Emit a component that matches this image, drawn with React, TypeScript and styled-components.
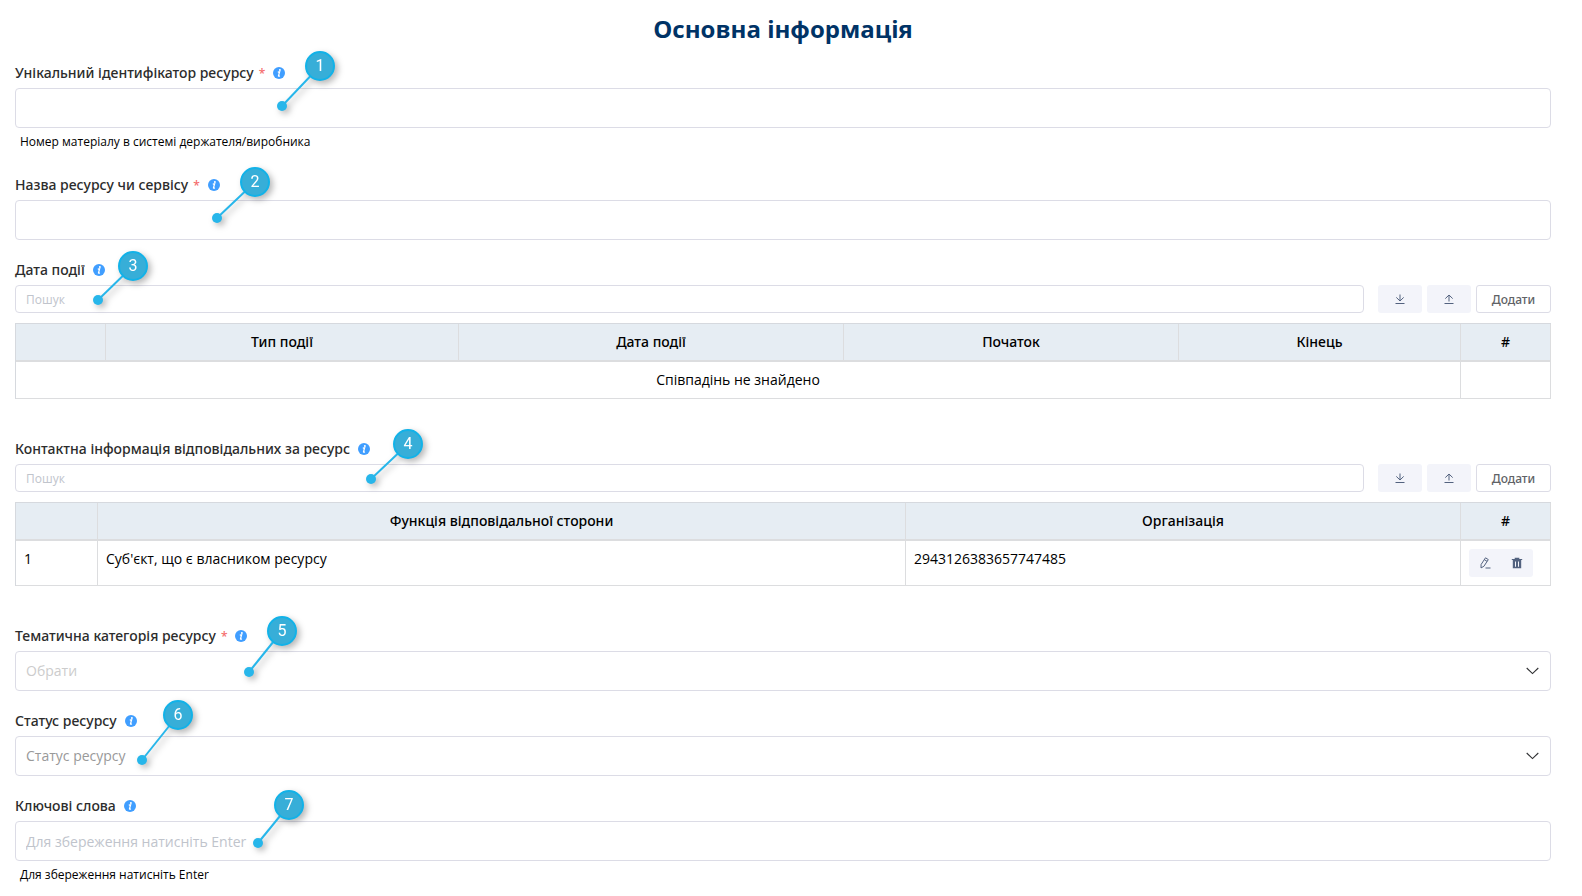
import React from "react";
import styled, { createGlobalStyle } from "styled-components";

const GlobalStyle = createGlobalStyle`
  *, *::before, *::after { box-sizing: border-box; }
  body {
    margin: 0;
    background: #fff;
    color: #000;
    font: 14px/20px "Open Sans", "Noto Sans", sans-serif;
  }
`;

const Form = styled.form`
  display: flex;
  flex-direction: column;
  gap: 20px;
  padding: 14px 31px 10px 15px;
`;

const Title = styled.h1`
  margin: 0 0 -1px;
  color: #003366;
  font-size: 24px;
  line-height: 30px;
  font-weight: 700;
  text-align: center;
`;

const FieldBox = styled.section<{ $spaced?: boolean }>`
  position: relative;
  padding-bottom: ${(p) => (p.$spaced ? 20 : 0)}px;
`;

const LabelRow = styled.div`
  display: flex;
  align-items: center;
  gap: 8px;
  height: 20px;
  margin-bottom: 5px;
`;

const Label = styled.label`
  color: #2c2c2c;
  font-family: "Noto Sans", sans-serif;
  font-weight: 500;
`;

const Required = styled.span`
  margin-left: 5px;
  color: #f56c6c;
  font-size: 12px;
`;

const TextInput = styled.input<{ $small?: boolean }>`
  display: block;
  flex: 1;
  width: 100%;
  min-width: 0;
  height: ${(p) => (p.$small ? 28 : 40)}px;
  padding: 0 10px;
  border: 1px solid #dcdce6;
  border-radius: 4px;
  background: #fff;
  color: #333;
  font: inherit;
  font-size: ${(p) => (p.$small ? 12 : 14)}px;
  outline: none;
  &::placeholder { color: #c0c4cc; opacity: 1; }
`;

const Hint = styled.p`
  margin: 0;
  padding: 5px 5px 4px;
  font-size: 12px;
  line-height: 18px;
`;

const SelectWrap = styled.div`
  display: grid;
  align-items: center;
  & > * { grid-area: 1 / 1; }
  & > svg {
    justify-self: end;
    margin-right: 12px;
    pointer-events: none;
  }
`;

const SelectBox = styled.select<{ $muted?: boolean }>`
  width: 100%;
  height: 40px;
  padding: 0 10px;
  appearance: none;
  border: 1px solid #dcdce6;
  border-radius: 4px;
  background: #fff;
  color: ${(p) => (p.$muted ? "#cccccc" : "#999999")};
  font: inherit;
  outline: none;
`;

const Toolbar = styled.div`
  display: flex;
  gap: 5px;
  margin-bottom: 10px;
  & > input { margin-right: 9px; }
`;

const Button = styled.button<{ $kind: "icon" | "outline" | "row" }>`
  display: flex;
  align-items: center;
  justify-content: center;
  width: ${(p) => ({ icon: 44, outline: 75, row: 32 })[p.$kind]}px;
  height: 28px;
  padding: 0;
  border: ${(p) => (p.$kind === "outline" ? "1px solid #dcdce6" : "0")};
  border-radius: ${(p) => (p.$kind === "row" ? 0 : 3)}px;
  background: ${(p) => (p.$kind === "outline" ? "#fff" : "#f3f4fa")};
  color: ${(p) => (p.$kind === "outline" ? "#606266" : "#53627f")};
  font-family: "Noto Sans", sans-serif;
  font-size: 12px;
  font-weight: 500;
  cursor: pointer;
`;

const ButtonPair = styled.div`
  display: flex;
  width: 64px;
  overflow: hidden;
  border-radius: 3px;
`;

const Table = styled.table`
  width: 100%;
  table-layout: fixed;
  border-collapse: separate;
  border-spacing: 0;
  border: 1px solid #d6d9de;
  border-width: 1px 0 0 1px;
`;

const Th = styled.th`
  padding: 8px;
  border-right: 1px solid #dcdddf;
  border-bottom: 2px solid #dcdddf;
  background: #e6edf3;
  font-family: "Noto Sans", sans-serif;
  font-weight: 500;
  text-align: center;
`;

const Td = styled.td<{ $center?: boolean }>`
  padding: 8px;
  border-right: 1px solid #dcdddf;
  border-bottom: 1px solid #dcdddf;
  text-align: ${(p) => (p.$center ? "center" : "left")};
  vertical-align: top;
`;

const CalloutBox = styled.span<{ $x: number; $y: number }>`
  position: absolute;
  left: ${(p) => p.$x}px;
  top: ${(p) => p.$y}px;
  z-index: 1;
  pointer-events: none;
  filter: drop-shadow(3px 3px 3px rgba(0, 0, 0, 0.28));
  & > svg {
    position: absolute;
    left: 0;
    top: 0;
    overflow: visible;
  }
`;

const Disc = styled.span`
  position: relative;
  display: block;
  width: 30px;
  height: 30px;
  border: 2px solid #12b2e8;
  border-radius: 50%;
  background: #37aed8;
  color: #fff;
  font-family: Roboto, sans-serif;
  font-size: 16px;
  line-height: 26px;
  text-align: center;
`;

type CalloutProps = { n: number; x: number; y: number; dx: number; dy: number };

/* Numbered disc with a leader line ending dx/dy away from the disc's centre. */
const Callout = ({ n, x, y, dx, dy }: CalloutProps) => (
  <CalloutBox $x={x} $y={y}>
    <svg width="30" height="30" aria-hidden="true">
      <line x1="15" y1="15" x2={15 + dx} y2={15 + dy} stroke="#27b6ea" strokeWidth="2" />
      <circle cx={15 + dx} cy={15 + dy} r="5" fill="#27b6ea" />
    </svg>
    <Disc>{n}</Disc>
  </CalloutBox>
);

const InfoIcon = () => (
  <svg width="12" height="12" viewBox="0 0 12 12" aria-hidden="true">
    <circle cx="6" cy="6" r="6" fill="#409eff" />
    <circle cx="6.900" cy="3" r="1" fill="#fff" />
    <path d="M4.800 5.100 6.600 4.800 5.500 8.900Q5.400 9.500 6.900 8.800" fill="none" stroke="#fff" strokeWidth="1.300" />
  </svg>
);

const Chevron = () => (
  <svg width="13" height="8" viewBox="0 0 13 8" fill="none" stroke="#303133" strokeWidth="1.1" aria-hidden="true">
    <path d="M.7 1 6.5 6.6 12.3 1" />
  </svg>
);

const ArrowIcon = ({ up }: { up?: boolean }) => (
  <svg width="10" height="10" viewBox="0 0 10 10" fill="none" stroke="currentColor" strokeWidth="1" aria-hidden="true">
    <path d={up ? "M5 7.5V1M1.3 4.6 5 1 8.7 4.6M.5 9.5h9" : "M5 .5V7M1.3 3.4 5 7 8.7 3.4M.5 9.5h9"} />
  </svg>
);

const EditIcon = () => (
  <svg width="12" height="12" viewBox="0 0 12 12" fill="none" stroke="currentColor" strokeWidth="1" aria-hidden="true">
    <path d="M6.500 .8 9.300 2.600 4.900 9.300 2 10.900 2.100 7.500ZM5.300 2.600 8.100 4.400M6.500 11h5" />
  </svg>
);

const TrashIcon = () => (
  <svg width="12" height="12" viewBox="0 0 12 12" fill="currentColor" aria-hidden="true">
    <path d="M3.7.8h4.6v1.1h2.9V3H.8V1.9h2.9z" />
    <path fillRule="evenodd" d="M1.8 3h8.4v8.200H1.800zM4 4.400v5.400h1V4.400zM7 4.400v5.400h1V4.400z" />
  </svg>
);

type FieldProps = {
  id: string;
  label: string;
  required?: boolean;
  spaced?: boolean;
  hint?: string;
  callout: CalloutProps;
  children: React.ReactNode;
};

const Field = ({ id, label, required, spaced, hint, callout, children }: FieldProps) => (
  <FieldBox $spaced={spaced}>
    <LabelRow>
      <Label htmlFor={id}>
        {label}
        {required && <Required>*</Required>}
      </Label>
      <InfoIcon />
    </LabelRow>
    {children}
    {hint && <Hint>{hint}</Hint>}
    <Callout {...callout} />
  </FieldBox>
);

const Search = ({ id }: { id: string }) => (
  <Toolbar>
    <TextInput $small id={id} type="text" placeholder="Пошук" />
    <Button $kind="icon" type="button" aria-label="Завантажити"><ArrowIcon /></Button>
    <Button $kind="icon" type="button" aria-label="Вивантажити"><ArrowIcon up /></Button>
    <Button $kind="outline" type="button">Додати</Button>
  </Toolbar>
);

const TableHead = ({ widths, titles }: { widths: number[]; titles: string[] }) => (
  <>
    <colgroup>
      {widths.map((w, i) => <col key={i} width={w} />)}
    </colgroup>
    <thead>
      <tr>{titles.map((t, i) => <Th key={i} scope="col">{t}</Th>)}</tr>
    </thead>
  </>
);

export default function App() {
  return (
    <>
      <GlobalStyle />
      <Form onSubmit={(e) => e.preventDefault()}>
        <Title>Основна інформація</Title>

        <Field id="uid" label="Унікальний ідентифікатор ресурсу" required
          hint="Номер матеріалу в системі держателя/виробника"
          callout={{ n: 1, x: 290, y: -12, dx: -38, dy: 40 }}>
          <TextInput id="uid" type="text" />
        </Field>

        <Field id="name" label="Назва ресурсу чи сервісу" required
          callout={{ n: 2, x: 225, y: -8, dx: -38, dy: 36 }}>
          <TextInput id="name" type="text" />
        </Field>

        <Field id="dates" label="Дата події" spaced
          callout={{ n: 3, x: 103, y: -9, dx: -35, dy: 34 }}>
          <Search id="dates" />
          <Table>
            <TableHead widths={[90, 353, 385, 335, 282, 90]}
              titles={["", "Тип події", "Дата події", "Початок", "Кінець", "#"]} />
            <tbody>
              <tr>
                <Td $center colSpan={5}>Співпадінь не знайдено</Td>
                <Td />
              </tr>
            </tbody>
          </Table>
        </Field>

        <Field id="contacts" label="Контактна інформація відповідальних за ресурс" spaced
          callout={{ n: 4, x: 378, y: -10, dx: -37, dy: 35 }}>
          <Search id="contacts" />
          <Table>
            <TableHead widths={[82, 808, 555, 90]}
              titles={["", "Функція відповідальної сторони", "Організація", "#"]} />
            <tbody>
              <tr>
                <Td>1</Td>
                <Td>Суб'єкт, що є власником ресурсу</Td>
                <Td>2943126383657747485</Td>
                <Td>
                  <ButtonPair>
                    <Button $kind="row" type="button" aria-label="Редагувати"><EditIcon /></Button>
                    <Button $kind="row" type="button" aria-label="Видалити"><TrashIcon /></Button>
                  </ButtonPair>
                </Td>
              </tr>
            </tbody>
          </Table>
        </Field>

        <Field id="topic" label="Тематична категорія ресурсу" required
          callout={{ n: 5, x: 252, y: -10, dx: -33, dy: 41 }}>
          <SelectWrap>
            <SelectBox id="topic" $muted><option>Обрати</option></SelectBox>
            <Chevron />
          </SelectWrap>
        </Field>

        <Field id="status" label="Статус ресурсу"
          callout={{ n: 6, x: 148, y: -11, dx: -36, dy: 45 }}>
          <SelectWrap>
            <SelectBox id="status"><option>Статус ресурсу</option></SelectBox>
            <Chevron />
          </SelectWrap>
        </Field>

        <Field id="keywords" label="Ключові слова" hint="Для збереження натисніть Enter"
          callout={{ n: 7, x: 259, y: -6, dx: -31, dy: 38 }}>
          <TextInput id="keywords" type="text" placeholder="Для збереження натисніть Enter" />
        </Field>
      </Form>
    </>
  );
}
